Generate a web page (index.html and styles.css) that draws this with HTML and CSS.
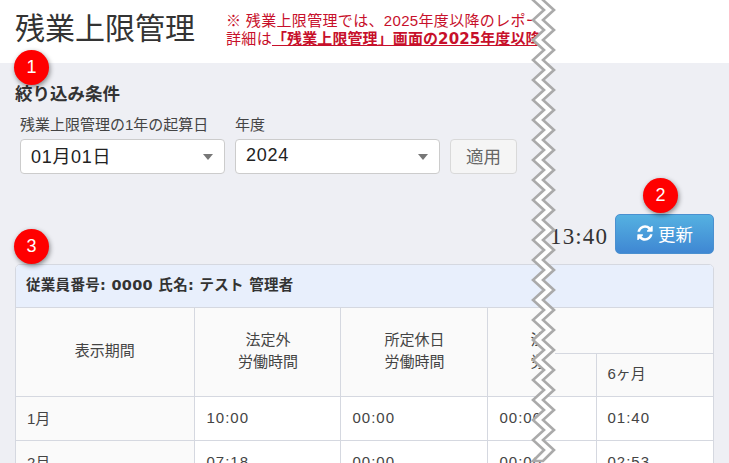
FILE: index.html
```html
<!DOCTYPE html>
<html lang="ja">
<head>
<meta charset="utf-8">
<title>残業上限管理</title>
<link rel="stylesheet" href="styles.css">
</head>
<body>
<div class="page">
  <header class="header">
    <h1 class="title">残業上限管理</h1>
    <div class="notice">
      <p class="notice-line">※ 残業上限管理では、2025年度以降のレポートをご利用いただけます。</p>
      <p class="notice-line">詳細は<a class="notice-link">「残業上限管理」画面の2025年度以降の仕様をご確認ください。</a></p>
    </div>
  </header>
  <main class="main">
    <section class="filters">
      <h2 class="filters-title">絞り込み条件</h2>
      <div class="filter-row">
        <div class="field">
          <span class="field-label">残業上限管理の1年の起算日</span>
          <div class="select"><span>01月01日</span><i class="caret"></i></div>
        </div>
        <div class="field">
          <span class="field-label">年度</span>
          <div class="select"><span>2024</span><i class="caret"></i></div>
        </div>
        <button class="apply" type="button">適用</button>
      </div>
    </section>
    <div class="toolbar">
      <span class="time">13:40</span>
      <button class="refresh" type="button">
        <svg class="refresh-icon" viewBox="0 0 1792 1792" aria-hidden="true"><path fill="currentColor" d="M1639 1056q0 5-1 7-64 268-268 434.500t-478 166.500q-146 0-282.500-55t-243.500-157l-129 129q-19 19-45 19t-45-19-19-45v-448q0-26 19-45t45-19h448q26 0 45 19t19 45-19 45l-137 137q71 66 161 102t187 36q134 0 250-65t186-179q11-17 53-117 8-23 30-23h192q13 0 22.500 9.500t9.500 22.500zm25-800v448q0 26-19 45t-45 19h-448q-26 0-45-19t-19-45 19-45l138-138q-148-137-349-137-134 0-250 65t-186 179q-11 17-53 117-8 23-30 23h-199q-13 0-22.500-9.500t-9.500-22.500v-7q65-268 270-434.500t480-166.500q146 0 284 55.500t245 156.500l130-129q19-19 45-19t45 19 19 45z"/></svg>
        <span>更新</span>
      </button>
    </div>
    <section class="card">
      <div class="card-head">従業員番号: 0000 氏名: テスト 管理者</div>
      <table class="grid">
        <colgroup>
          <col class="c1"><col class="c2"><col class="c3"><col class="c4"><col class="c5"><col class="c6">
        </colgroup>
        <thead>
          <tr class="head-a">
            <th rowspan="2">表示期間</th>
            <th rowspan="2" class="shift">法定外<br>労働時間</th>
            <th rowspan="2" class="shift">所定休日<br>労働時間</th>
            <th rowspan="2" class="torn"><div class="torn-text">法定休日<br>労働時間</div></th>
            <th colspan="2" class="torn-right"></th>
          </tr>
          <tr class="head-b">
            <th class="torn-right"></th>
            <th class="left">6ヶ月</th>
          </tr>
        </thead>
        <tbody>
          <tr>
            <td class="month">1月</td><td>10:00</td><td>00:00</td><td colspan="2" class="data">00:00</td><td class="pad-l">01:40</td>
          </tr>
          <tr>
            <td class="month">2月</td><td>07:18</td><td>00:00</td><td colspan="2" class="data">00:00</td><td class="pad-l">02:53</td>
          </tr>
        </tbody>
      </table>
    </section>
  </main>

  <span class="badge badge-1">1</span>
  <span class="badge badge-2">2</span>
  <span class="badge badge-3">3</span>

  <svg class="tear" viewBox="0 0 26 463" aria-hidden="true">
    <polygon class="tear-fill" points="3,-20 14,-10 3,0 14,10 3,20 14,30 3,40 14,50 3,60 14,70 3,80 14,90 3,100 14,110 3,120 14,130 3,140 14,150 3,160 14,170 3,180 14,190 3,200 14,210 3,220 14,230 3,240 14,250 3,260 14,270 3,280 14,290 3,300 14,310 3,320 14,330 3,340 14,350 3,360 14,370 3,380 14,390 3,400 14,410 3,420 14,430 3,440 14,450 3,461 13,461 24,450 13,440 24,430 13,420 24,410 13,400 24,390 13,380 24,370 13,360 24,350 13,340 24,330 13,320 24,310 13,300 24,290 13,280 24,270 13,260 24,250 13,240 24,230 13,220 24,210 13,200 24,190 13,180 24,170 13,160 24,150 13,140 24,130 13,120 24,110 13,100 24,90 13,80 24,70 13,60 24,50 13,40 24,30 13,20 24,10 13,0 24,-10 13,-20"/>
  </svg>
</div>
</body>
</html>
```

FILE: styles.css
```css
* { box-sizing: border-box; }
html, body { margin: 0; padding: 0; background: #fff; }
body {
  font-family: "Liberation Sans", "Noto Sans CJK JP", sans-serif;
  color: #333;
  font-size: 15px;
}
.page {
  position: relative;
  width: 729px;
  height: 463px;
  overflow: hidden;
}
.header {
  display: flex;
  align-items: flex-start;
  height: 63px;
  padding-left: 15px;
  background: #fff;
}
.title {
  margin: 8px 0 0;
  font-size: 30px;
  line-height: 42px;
  font-weight: 400;
  color: #333;
  flex: none;
  width: 211px;
}
.notice {
  margin-top: 12px;
  width: 315px;
  overflow: hidden;
  color: #c7102b;
  font-size: 15px;
  letter-spacing: .33px;
  line-height: 18px;
  white-space: nowrap;
}
.notice-line { margin: 0; }
.notice-link {
  font-family: "DejaVu Sans", "Noto Sans CJK JP", sans-serif;
  font-weight: 700;
  letter-spacing: .1px;
  text-decoration: underline;
}
.main {
  height: 400px;
  padding: 19px 15px 0;
  background: #eeeff4;
}
.filters-title {
  margin: 0;
  font-size: 17.5px;
  line-height: 25px;
  font-weight: 700;
  color: #333;
}
.filter-row {
  display: flex;
  align-items: flex-end;
  gap: 10px;
  padding: 7px 5px 0;
}
.field {
  display: flex;
  flex-direction: column;
  gap: 4px;
  width: 205px;
}
.field-label {
  font-size: 15px;
  line-height: 21px;
  color: #444;
  white-space: nowrap;
}
.select {
  display: flex;
  align-items: center;
  justify-content: space-between;
  height: 35px;
  padding: 0 11px 0 10px;
  background: #fff;
  border: 1px solid #ccc;
  border-radius: 4px;
  font-size: 18px;
  letter-spacing: .7px;
  color: #222;
}
.select span { padding-bottom: 3px; }
.caret {
  width: 0;
  height: 0;
  border-left: 5px solid transparent;
  border-right: 5px solid transparent;
  border-top: 6px solid #777;
}
.apply {
  width: 67px;
  height: 35px;
  padding: 0 0 2px;
  border: 1px solid #d9d9d9;
  border-radius: 4px;
  background: #f5f5f5;
  color: #666;
  font: inherit;
  font-size: 17.5px;
}
.toolbar {
  display: flex;
  align-items: center;
  justify-content: flex-end;
  gap: 7px;
  margin-top: 40px;
  height: 40px;
}
.time {
  font-family: "Liberation Serif", serif;
  font-size: 23px;
  letter-spacing: 1.1px;
  color: #333;
  margin-top: 6px;
}
.refresh {
  display: flex;
  align-items: center;
  justify-content: center;
  gap: 4px;
  width: 99px;
  height: 40px;
  padding: 0 0 2px;
  border: 1px solid #4a90d0;
  border-radius: 5px;
  background: linear-gradient(#55b1e1, #3f87d3);
  color: #fff;
  font: inherit;
  font-size: 17.5px;
}
.refresh-icon { width: 18px; height: 18px; }
.card {
  margin-top: 10px;
  background: #fff;
  border: 1px solid #d5d8e0;
  border-radius: 5px 5px 0 0;
  overflow: hidden;
}
.card-head {
  height: 43px;
  padding: 0 0 5px 10px;
  display: flex;
  align-items: center;
  background: #e8effc;
  font-family: "DejaVu Sans", "Noto Sans CJK JP", sans-serif;
  font-weight: 700;
  font-size: 14.5px;
  letter-spacing: .3px;
  color: #333;
  border-bottom: 1px solid #d5d8e0;
}
.grid {
  width: 698px;
  border-collapse: collapse;
  table-layout: fixed;
}
.c1 { width: 178px; }
.c2 { width: 146px; }
.c3 { width: 147px; }
.c4 { width: 68px; }
.c5 { width: 41px; }
.c6 { width: 118px; }
.grid th, .grid td {
  border: 1px solid #d5d8e0;
  font-size: 15px;
  color: #444;
}
.grid tr > :first-child { border-left: 0; }
.grid tr > :last-child { border-right: 0; }
.grid th {
  background: #fafafa;
  font-weight: 400;
  line-height: 22px;
  text-align: center;
  padding: 0 0 2px;
  vertical-align: middle;
}
.grid th.shift { padding-left: 2px; }
.head-a { height: 45px; }
.head-b { height: 43px; }
.grid thead tr:first-child th { border-top: 0; }
.grid th.left { text-align: left; padding: 0 0 2px 11px; }
.grid th.torn { border-right: 0; overflow: hidden; text-align: left; }
.torn-text { padding-left: 43px; white-space: nowrap; width: 55px; overflow: hidden; }
.grid th.torn-right { border-left: 0; }
.grid tbody tr { height: 44px; }
.grid td {
  padding: 0 0 2px 12px;
  letter-spacing: 1px;
  background: #fff;
}
.grid td.month { background: #fafafa; padding-left: 11px; letter-spacing: 0; }
.grid td.pad-l { padding-left: 11px; }
.badge {
  position: absolute;
  width: 35px;
  height: 35px;
  border-radius: 50%;
  background: #f00;
  color: #fff;
  font-size: 18px;
  line-height: 34px;
  text-align: center;
  box-shadow: 1px 2px 5px rgba(0, 0, 0, .45);
}
.badge-1 { left: 14px; top: 50px; }
.badge-2 { left: 643px; top: 178px; }
.badge-3 { left: 14px; top: 229px; }
.tear {
  position: absolute;
  left: 530px;
  top: 0;
  width: 26px;
  height: 463px;
  overflow: visible;
}
.tear-fill {
  fill: #fff;
  stroke: #aaa;
  stroke-width: 2.6;
}
```
